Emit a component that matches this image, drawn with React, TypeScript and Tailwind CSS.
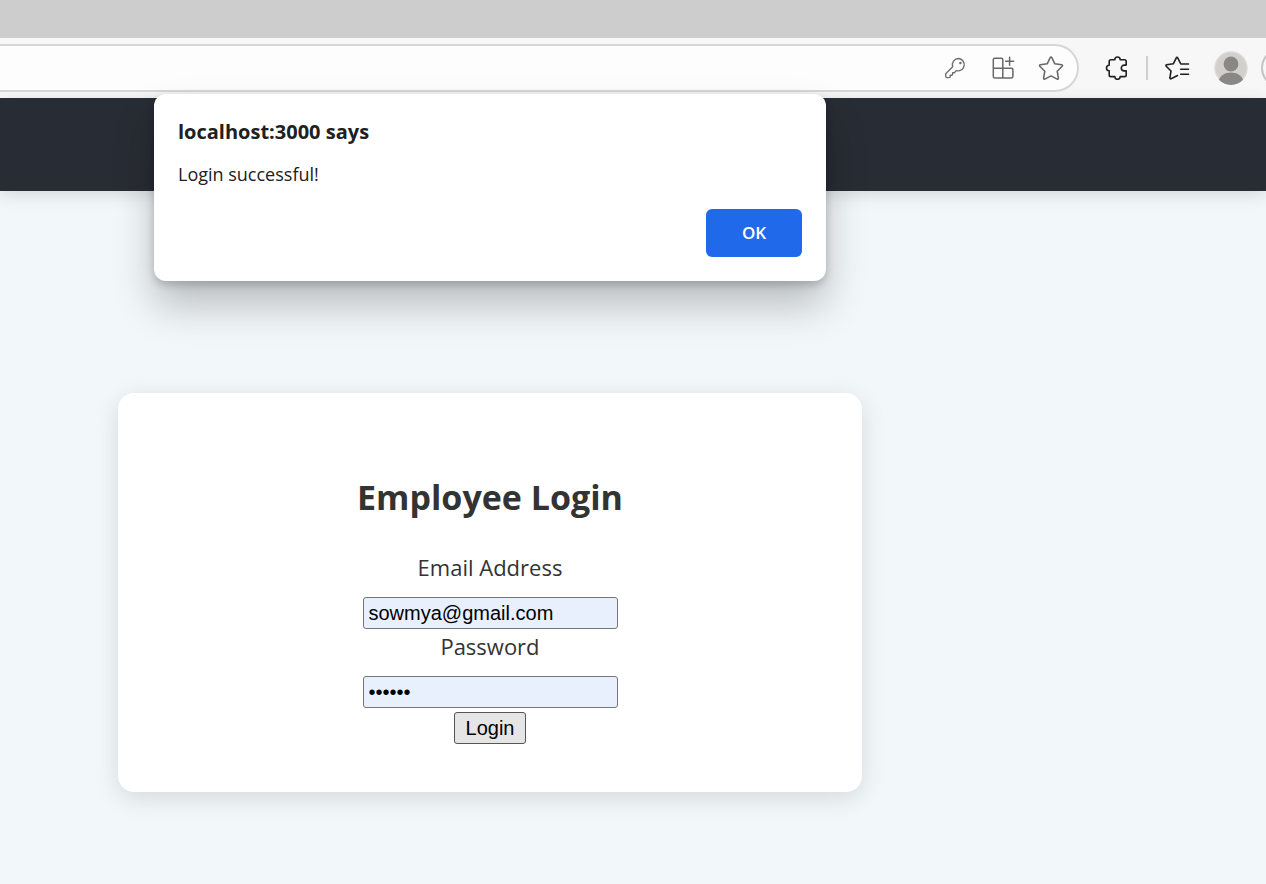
import { useState } from "react";
import type { ReactNode } from "react";

function ToolButton({ label, children }: { label: string; children: ReactNode }) {
  return (
    <button type="button" aria-label={label} className="flex size-6 items-center justify-center">
      {children}
    </button>
  );
}

function KeyIcon() {
  return (
    <svg viewBox="0 0 24 24" className="size-6" fill="none" stroke="#707070" strokeWidth="1.4" strokeLinejoin="round">
      <path d="M15.6 2.5a6.200 6.200 0 0 0-5.900 8.200L3.200 17.200a1.600 1.600 0 0 0-.5 1.200v1.800c0 .8.500 1.400 1.300 1.400h1.900c.8 0 1.300-.5 1.300-1.200v-1.200h1.400c.6 0 1-.4 1-1v-1.500h1.300c.3 0 .6-.1.8-.3l1.500-1.800a6.200 6.200 0 1 0 2.400-12.100Z" />
      <circle cx="17.400" cy="7" r="1.300" fill="#707070" stroke="none" />
    </svg>
  );
}

function AppsIcon() {
  return (
    <svg viewBox="0 0 24 24" className="size-6" fill="none" stroke="#686868" strokeWidth="1.5" strokeLinecap="round" strokeLinejoin="round">
      <path d="M11.8 12.2V3.7c0-.8-.6-1.4-1.4-1.4H3.7c-.8 0-1.4.6-1.4 1.4v16.800c0 .8.6 1.4 1.4 1.4h16.800c.8 0 1.4-.6 1.4-1.4v-6.900c0-.8-.6-1.4-1.4-1.4H2.300M11.800 12.200v9.700M18.600 1.200v8M14.600 5.200h8" />
    </svg>
  );
}

function StarIcon() {
  return (
    <svg viewBox="0 0 26 26" className="size-[26px] shrink-0" fill="none" stroke="#686868" strokeWidth="1.6" strokeLinejoin="round">
      <path d="M12.2 2.5a.9.9 0 0 1 1.6 0l3 6.3 6.9 1a.9.9 0 0 1 .5 1.5l-5 4.9 1.2 7a.9.9 0 0 1-1.3.9L13 20.9l-6.1 3.2a.9.9 0 0 1-1.3-.9l1.2-7-5-4.9a.9.9 0 0 1 .5-1.5l6.9-1Z" />
    </svg>
  );
}

function PuzzleIcon() {
  return (
    <svg viewBox="0 0 24 24" className="size-6" fill="none" stroke="#202020" strokeWidth="1.6" strokeLinejoin="round">
      <path d="M10.8 3.700a2.700 2.700 0 0 1 5.400 0h4.300c1 0 1.700.7 1.700 1.700v3.700h-2a2.900 2.900 0 0 0 0 5.800h2v4c0 1-.7 1.700-1.700 1.700h-4.300a2.700 2.700 0 0 1-5.400 0H6.900c-1 0-1.700-.7-1.700-1.700v-4.200a2.700 2.700 0 0 1 0-5.400V5.400c0-1 .7-1.700 1.700-1.700Z" />
    </svg>
  );
}

function FavoritesIcon() {
  return (
    <svg viewBox="0 0 26 26" className="size-[26px] shrink-0" fill="none" stroke="#202020" strokeWidth="1.6" strokeLinecap="round" strokeLinejoin="round">
      <path d="M24.500 9h-7.700l-3.100-6.200a.8.8 0 0 0-1.400 0l-3 6-6.700 1a.8.8 0 0 0-.4 1.400l4.800 4.800-1.100 6.800a.8.8 0 0 0 1.200.9l6.400-3.200M16.700 14.200h7.800M16.700 19.300h7.800" />
    </svg>
  );
}

function AvatarIcon() {
  return (
    <svg viewBox="0 0 34 34" className="size-[34px]">
      <defs>
        <clipPath id="avatar-disc">
          <circle cx="17" cy="17" r="17" />
        </clipPath>
      </defs>
      <g clipPath="url(#avatar-disc)">
        <circle cx="17" cy="17" r="17" fill="#e0deda" />
        <circle cx="17" cy="17" r="15.5" fill="#d2d0cc" />
        <circle cx="17" cy="13" r="7.4" fill="#8a8785" />
        <path d="M4.800 29c2-4.800 6.500-7.500 12.200-7.500s10.200 2.700 12.200 7.500C26 32.300 21.800 34 17 34S8 32.300 4.800 29Z" fill="#8a8785" />
      </g>
    </svg>
  );
}

function BrowserBar() {
  return (
    <div>
      <div className="h-[38px] bg-[#cdcdcd]" />
      <div className="flex h-[60px] items-center overflow-hidden bg-[#f7f7f7]">
        <div className="flex h-12 flex-1 items-center justify-end gap-6 rounded-r-full border-2 border-l-0 border-[#d6d6d6] bg-[#fdfdfd] pr-[14px]">
          <ToolButton label="Saved passwords"><KeyIcon /></ToolButton>
          <ToolButton label="Install app"><AppsIcon /></ToolButton>
          <ToolButton label="Add to favorites"><StarIcon /></ToolButton>
        </div>
        <div className="flex shrink-0 items-center pl-[25px]">
          <ToolButton label="Extensions"><PuzzleIcon /></ToolButton>
          <div className="ml-[18px] h-6 w-0.5 bg-[#cfcfcf]" />
          <div className="ml-[17px] flex">
            <ToolButton label="Favorites"><FavoritesIcon /></ToolButton>
          </div>
          <button type="button" aria-label="Profile" className="ml-[25px]"><AvatarIcon /></button>
        </div>
        <div className="ml-[13px] h-10 w-[5px] shrink-0 overflow-hidden">
          <div className="h-10 w-24 rounded-full border-2 border-[#c4c4c4]" />
        </div>
      </div>
    </div>
  );
}

function AlertDialog({ onClose }: { onClose: () => void }) {
  return (
    <div
      role="alertdialog"
      aria-labelledby="alert-title"
      aria-describedby="alert-text"
      className="absolute inset-x-0 top-[94px] mx-auto w-[672px] rounded-xl bg-white p-6 text-[#202020] shadow-[0_24px_40px_rgba(0,0,0,0.24),0_4px_8px_rgba(0,0,0,0.18)]"
    >
      <h2 id="alert-title" className="text-xl leading-7 font-bold">localhost:3000 says</h2>
      <p id="alert-text" className="mt-[17px] h-[22px] overflow-hidden text-lg leading-[22px]">Login successful!</p>
      <div className="mt-6 flex justify-end">
        <button type="button" onClick={onClose} className="h-12 w-24 rounded-md bg-[#2169eb] text-[17px] font-semibold text-white">
          OK
        </button>
      </div>
    </div>
  );
}

const labelClass = "mb-[13px] text-[22px] leading-[34px]";
const inputClass =
  "h-8 w-[255px] rounded-[3px] border border-[#767676] bg-[#e8f0fe] px-[5px] font-['Liberation_Sans',sans-serif] text-xl text-black outline-none";

function LoginCard() {
  const [email, setEmail] = useState("sowmya@gmail.com");
  const [password, setPassword] = useState("secret");
  return (
    <form
      onSubmit={(event) => event.preventDefault()}
      className="mx-auto flex w-[744px] flex-col items-center rounded-2xl bg-white p-12 text-[#333333] shadow-[0_6px_24px_rgba(0,0,0,0.12)]"
    >
      <h1 className="mt-8 mb-7 text-[34px] leading-[49px] font-bold">Employee Login</h1>
      <label htmlFor="email" className={labelClass}>Email Address</label>
      <input id="email" type="email" value={email} onChange={(e) => setEmail(e.target.value)} className={inputClass} />
      <label htmlFor="password" className={labelClass}>Password</label>
      <input id="password" type="password" value={password} onChange={(e) => setPassword(e.target.value)} className={inputClass} />
      <button
        type="submit"
        className="mt-1 h-8 rounded-[3px] border border-[#555555] bg-[#e5e5e5] px-[11px] font-['Liberation_Sans',sans-serif] text-xl leading-7 text-black"
      >
        Login
      </button>
    </form>
  );
}

export default function App() {
  const [open, setOpen] = useState(true);
  return (
    <div className="min-h-screen bg-[#f2f7fa] font-['Open_Sans','Noto_Sans',sans-serif]">
      <BrowserBar />
      <header className="h-[93px] bg-[#282c34] shadow-[0_4px_16px_rgba(0,0,0,0.12)]" />
      <main className="max-w-[980px] pt-[202px] pb-[92px]">
        <LoginCard />
      </main>
      {open && (
        <div className="absolute inset-x-0 top-0 max-w-[980px]">
          <AlertDialog onClose={() => setOpen(false)} />
        </div>
      )}
    </div>
  );
}
